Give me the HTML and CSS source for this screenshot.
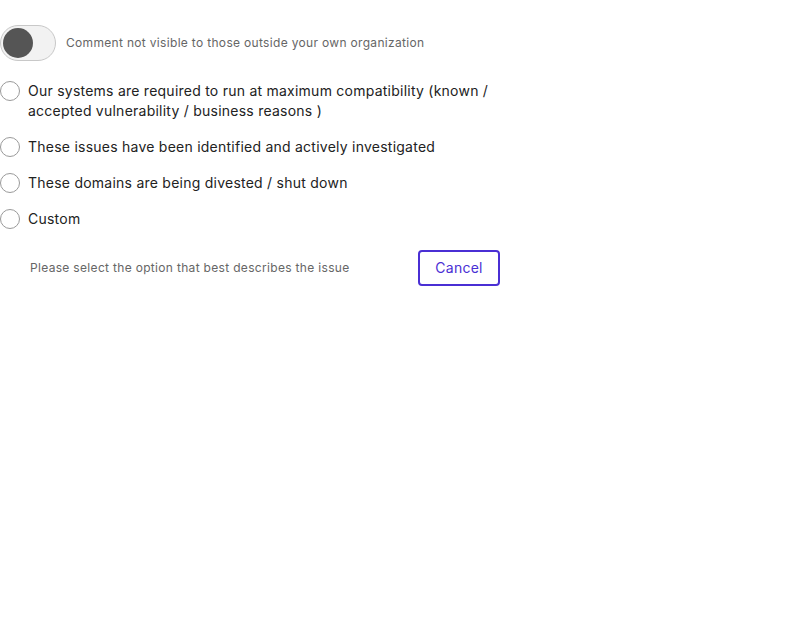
FILE: index.html
```html
<!DOCTYPE html>
<html>
<head>
<meta charset="utf-8">
<link rel="stylesheet" href="styles.css">
</head>
<body>
<div class="panel">
  <div class="toggle-row">
    <span class="toggle"><span class="knob"></span></span>
    <span class="hint">Comment not visible to those outside your own organization</span>
  </div>
  <div class="options">
    <label class="option"><span class="radio"></span><span class="label">Our systems are required to run at maximum compatibility (known / accepted vulnerability / business reasons )</span></label>
    <label class="option"><span class="radio"></span><span class="label">These issues have been identified and actively investigated</span></label>
    <label class="option"><span class="radio"></span><span class="label">These domains are being divested / shut down</span></label>
    <label class="option"><span class="radio"></span><span class="label">Custom</span></label>
  </div>
  <div class="footer">
    <span class="hint">Please select the option that best describes the issue</span>
    <button class="cancel">Cancel</button>
  </div>
</div>
</body>
</html>
```

FILE: styles.css
```css
html, body {
  margin: 0;
  padding: 0;
  background: #fff;
}
body {
  font-family: Inter, "Noto Sans", sans-serif;
  color: #222;
}
.panel {
  width: 500px;
  padding-top: 25px;
}
.toggle-row {
  display: flex;
  align-items: center;
  gap: 10px;
}
.toggle {
  box-sizing: border-box;
  width: 56px;
  height: 36px;
  border: 1px solid #c8c8c8;
  border-radius: 18px;
  background: #f2f2f2;
  display: flex;
  align-items: center;
  padding-left: 2px;
}
.knob {
  width: 30px;
  height: 30px;
  border-radius: 50%;
  background: #555;
}
.hint {
  font-size: 12px;
  line-height: 16px;
  letter-spacing: 0.32px;
  color: #666;
}
.options {
  margin-top: 20px;
  display: flex;
  flex-direction: column;
  gap: 16px;
}
.option {
  display: flex;
  align-items: flex-start;
  gap: 8px;
  font-size: 14px;
  line-height: 20px;
  letter-spacing: 0.24px;
}
.radio {
  box-sizing: border-box;
  flex: none;
  width: 20px;
  height: 20px;
  border: 1px solid #9a9a9a;
  border-radius: 50%;
  background: #fff;
}
.footer {
  margin-top: 21px;
  display: flex;
  justify-content: space-between;
  align-items: center;
  padding-left: 30px;
}
.cancel {
  box-sizing: border-box;
  width: 82px;
  height: 36px;
  border: 2px solid #4a2fd4;
  border-radius: 4px;
  background: #fff;
  color: #4a2fd4;
  font-family: Inter, "Noto Sans", sans-serif;
  font-size: 14px;
  letter-spacing: 0.24px;
  padding: 0 0 1px;
}
```
